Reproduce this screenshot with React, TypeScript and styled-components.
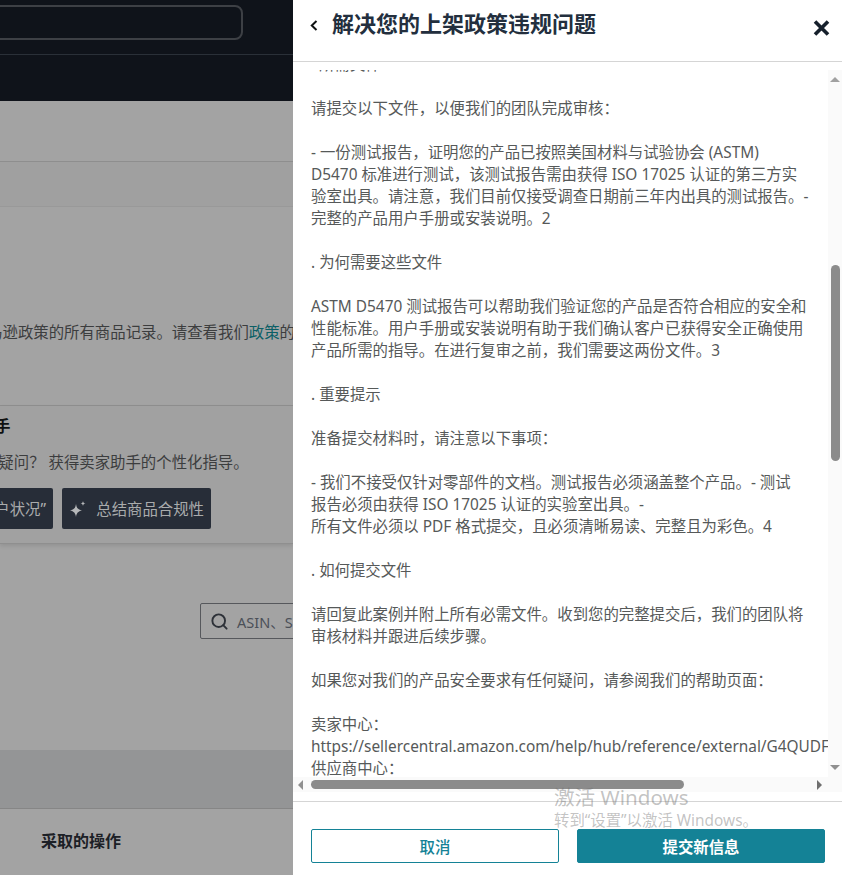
import React from 'react';
import styled, { createGlobalStyle } from 'styled-components';
import { Search } from 'lucide-react';

const GlobalStyle = createGlobalStyle`
  * {
    box-sizing: border-box;
  }
  html, body {
    margin: 0;
    padding: 0;
    background: #fff;
  }
  body {
    font-family: "Noto Sans", "Noto Sans CJK SC", sans-serif;
  }
`;

const Screen = styled.div`
  width: 842px;
  height: 875px;
  display: flex;
  position: relative;
  overflow: hidden;
`;

/* dimmed page behind the drawer */
const Backdrop = styled.div`
  width: 293px;
  flex: none;
  display: flex;
  flex-direction: column;
  overflow: hidden;
  background: #a3a3a3;
  font-size: 15.4px;
  color: #3c3d3e;
  white-space: nowrap;
`;

const TopNav = styled.div`
  height: 55px;
  padding-top: 5px;
  background: #0f131a;
  border-bottom: 1px solid #2a3038;
`;

const NavSearch = styled.div`
  width: 251px;
  height: 35px;
  margin-left: -8px;
  border: 2px solid #3d4045;
  border-radius: 8px;
`;

const SubNav = styled.div`
  height: 46px;
  background: #0f131a;
`;

const PageHead = styled.div`
  height: 61px;
  border-bottom: 1px solid #8e8e8e;
`;

const TabsRow = styled.div`
  height: 45px;
  background: #a0a0a0;
  border-bottom: 1px solid #999;
`;

const Intro = styled.div`
  height: 199px;
  padding-top: 115px;
  line-height: 22px;
  border-bottom: 1px solid #8f8f8f;
`;

const IntroText = styled.div`
  margin-left: -136px;
`;

const Link = styled.span`
  color: #0b5f66;
`;

const AssistCard = styled.div`
  height: 138px;
  padding-top: 10px;
  background: #a1a1a1;
  border-bottom: 1px solid #8f8f8f;
  box-shadow: 0 2px 4px rgba(0, 0, 0, 0.1);
`;

const AssistTitle = styled.div`
  margin-left: -82px;
  font-weight: 700;
  line-height: 22px;
  color: #0f1111;
`;

const AssistText = styled.div`
  margin: 14px 0 0 -94px;
  line-height: 22px;
`;

const AssistActions = styled.div`
  display: flex;
  gap: 9px;
  margin: 14px 0 0 -137px;
`;

const PromptButton = styled.div<{ $width: number }>`
  height: 41px;
  width: ${({ $width }) => $width}px;
  display: flex;
  align-items: center;
  justify-content: flex-end;
  gap: 9px;
  padding-right: 7px;
  background: #272d38;
  border-radius: 2px;
  color: #a9abac;
  flex: none;
`;

const TableTools = styled.div`
  height: 206px;
  padding: 59px 0 0 200px;
`;

const TableSearch = styled.div`
  width: 200px;
  height: 36px;
  display: flex;
  align-items: center;
  gap: 8px;
  padding-left: 9px;
  border: 1px solid #56585c;
  border-radius: 2px;
  font-size: 14.5px;
  color: #4b5058;

  svg {
    color: #2d3138;
    flex: none;
  }
`;

const TableBand = styled.div`
  height: 59px;
  background: #949596;
  border-bottom: 1px solid #868686;
`;

const TableHead = styled.div`
  flex: 1;
  display: flex;
  align-items: center;
  padding: 0 0 4px 41px;
  font-size: 16px;
  font-weight: 700;
  color: #1c2026;
`;

/* drawer */
const Drawer = styled.aside`
  flex: 1;
  min-width: 0;
  display: flex;
  flex-direction: column;
  background: #fff;
`;

const DrawerHeader = styled.header`
  height: 62px;
  flex: none;
  display: flex;
  align-items: flex-start;
  padding: 8px 12px 0 17px;
  border-bottom: 1px solid #d5d5d5;
  color: #232f3e;
`;

const BackIcon = styled.svg`
  margin-top: 12px;
  flex: none;
`;

const Title = styled.h1`
  flex: 1;
  margin: 0 0 0 14px;
  font-size: 22px;
  line-height: 30px;
  font-weight: 700;
`;

const CloseIcon = styled.svg`
  margin-top: 12px;
  flex: none;
`;

const ScrollArea = styled.div`
  flex: none;
  margin-top: 8px;
  height: 722px;
  display: flex;
  flex-direction: column;
`;

const ScrollRow = styled.div`
  height: 707px;
  display: flex;
`;

const Viewport = styled.div`
  flex: 1;
  min-width: 0;
  overflow: hidden;
  padding-left: 18px;
`;

const Body = styled.div`
  margin-top: -16px;
  font-size: 15.4px;
  line-height: 22px;
  color: #565959;
  white-space: nowrap;
`;

const Line = styled.div`
  height: 22px;
`;

const VTrack = styled.div`
  width: 14px;
  flex: none;
  display: flex;
  flex-direction: column;
  align-items: center;
  background: #fafafa;
`;

const VThumb = styled.div`
  width: 9px;
  height: 196px;
  margin-top: 183px;
  background: #8b8b8b;
  border-radius: 5px;
`;

const HTrack = styled.div`
  height: 15px;
  display: flex;
  align-items: center;
  background: #fafafa;
`;

const HThumb = styled.div`
  width: 373px;
  height: 9px;
  margin-left: 8px;
  background: #8b8b8b;
  border-radius: 5px;
`;

const ArrowUp = styled.div`
  margin-top: 7px;
  border-left: 5px solid transparent;
  border-right: 5px solid transparent;
  border-bottom: 5px solid #a0a0a0;
`;

const ArrowDown = styled.div`
  margin-top: auto;
  margin-bottom: 7px;
  border-left: 5px solid transparent;
  border-right: 5px solid transparent;
  border-top: 5px solid #8f8f8f;
`;

const ArrowLeft = styled.div`
  margin-left: 5px;
  border-top: 5px solid transparent;
  border-bottom: 5px solid transparent;
  border-right: 5px solid #8f8f8f;
`;

const ArrowRight = styled.div`
  margin-left: auto;
  margin-right: 20px;
  border-top: 5px solid transparent;
  border-bottom: 5px solid transparent;
  border-left: 5px solid #6f6f6f;
`;

const Footer = styled.footer`
  flex: none;
  margin-top: 9px;
  padding: 27px 17px 0 18px;
  display: flex;
  gap: 18px;
  border-top: 1px solid #d5d5d5;
`;

const Action = styled.button<{ $primary?: boolean }>`
  flex: 1;
  height: 34px;
  padding: 0;
  font-family: inherit;
  font-size: 15.4px;
  font-weight: ${({ $primary }) => ($primary ? 700 : 500)};
  color: ${({ $primary }) => ($primary ? '#fff' : '#148296')};
  background: ${({ $primary }) => ($primary ? '#148296' : '#fff')};
  border: 1px solid #148296;
  border-radius: 2px;
`;

const Watermark = styled.div`
  position: absolute;
  left: 554px;
  top: 784px;
  color: rgba(110, 110, 110, 0.42);
  pointer-events: none;
`;

const WatermarkTitle = styled.div`
  font-size: 20.6px;
  line-height: 26px;
`;

const WatermarkHint = styled.div`
  font-size: 15.4px;
  line-height: 20px;
  margin-top: 1px;
`;

const bodyLines = [
  '. 所需文件',
  '',
  '请提交以下文件，以便我们的团队完成审核：',
  '',
  '- 一份测试报告，证明您的产品已按照美国材料与试验协会 (ASTM)',
  'D5470 标准进行测试，该测试报告需由获得 ISO 17025 认证的第三方实',
  '验室出具。请注意，我们目前仅接受调查日期前三年内出具的测试报告。-',
  '完整的产品用户手册或安装说明。2',
  '',
  '. 为何需要这些文件',
  '',
  'ASTM D5470 测试报告可以帮助我们验证您的产品是否符合相应的安全和',
  '性能标准。用户手册或安装说明有助于我们确认客户已获得安全正确使用',
  '产品所需的指导。在进行复审之前，我们需要这两份文件。3',
  '',
  '. 重要提示',
  '',
  '准备提交材料时，请注意以下事项：',
  '',
  '- 我们不接受仅针对零部件的文档。测试报告必须涵盖整个产品。- 测试',
  '报告必须由获得 ISO 17025 认证的实验室出具。-',
  '所有文件必须以 PDF 格式提交，且必须清晰易读、完整且为彩色。4',
  '',
  '. 如何提交文件',
  '',
  '请回复此案例并附上所有必需文件。收到您的完整提交后，我们的团队将',
  '审核材料并跟进后续步骤。',
  '',
  '如果您对我们的产品安全要求有任何疑问，请参阅我们的帮助页面：',
  '',
  '卖家中心：',
  'https://sellercentral.amazon.com/help/hub/reference/external/G4QUDFLEVCJG7XVS',
  '供应商中心：',
];

const Sparkle = () => (
  <svg width="18" height="18" viewBox="0 0 18 18" fill="#b5b7b9">
    <path d="M7 4 C7.6 8 9 9.6 13 10.5 C9 11.4 7.6 13 7 17 C6.4 13 5 11.4 1 10.5 C5 9.6 6.4 8 7 4 Z" />
    <path d="M14 1 C14.2 2.6 14.8 3.2 16.5 3.5 C14.8 3.8 14.2 4.4 14 6 C13.8 4.4 13.2 3.8 11.5 3.5 C13.2 3.2 13.8 2.6 14 1 Z" />
  </svg>
);

const App = () => {
  return (
    <Screen>
      <GlobalStyle />
      <Backdrop>
        <TopNav>
          <NavSearch />
        </TopNav>
        <SubNav />
        <PageHead />
        <TabsRow />
        <Intro>
          <IntroText>
            此处列出了违反亚马逊政策的所有商品记录。请查看我们<Link>政策</Link>的详细信息
          </IntroText>
        </Intro>
        <AssistCard>
          <AssistTitle>询问卖家助手</AssistTitle>
          <AssistText>对您的账户有疑问？ 获得卖家助手的个性化指导。</AssistText>
          <AssistActions>
            <PromptButton $width={190}>“解释我的账户状况”</PromptButton>
            <PromptButton $width={149}>
              <Sparkle />
              总结商品合规性
            </PromptButton>
          </AssistActions>
        </AssistCard>
        <TableTools>
          <TableSearch>
            <Search size={19} strokeWidth={2.4} />
            ASIN、SKU
          </TableSearch>
        </TableTools>
        <TableBand />
        <TableHead>采取的操作</TableHead>
      </Backdrop>

      <Drawer>
        <DrawerHeader>
          <BackIcon width="8" height="11" viewBox="0 0 8 11">
            <path d="M6.5 1 L1.8 5.5 L6.5 10" fill="none" stroke="#0f1111" strokeWidth="2" />
          </BackIcon>
          <Title>解决您的上架政策违规问题</Title>
          <CloseIcon width="17" height="16" viewBox="0 0 17 16">
            <path d="M2 1.5 L15 14.5 M15 1.5 L2 14.5" fill="none" stroke="#16202c" strokeWidth="3.6" />
          </CloseIcon>
        </DrawerHeader>

        <ScrollArea>
          <ScrollRow>
            <Viewport>
              <Body>
                {bodyLines.map((text, index) => (
                  <Line key={index}>{text}</Line>
                ))}
              </Body>
            </Viewport>
            <VTrack>
              <ArrowUp />
              <VThumb />
              <ArrowDown />
            </VTrack>
          </ScrollRow>
          <HTrack>
            <ArrowLeft />
            <HThumb />
            <ArrowRight />
          </HTrack>
        </ScrollArea>

        <Footer>
          <Action>取消</Action>
          <Action $primary>提交新信息</Action>
        </Footer>
      </Drawer>

      <Watermark>
        <WatermarkTitle>激活 Windows</WatermarkTitle>
        <WatermarkHint>转到“设置”以激活 Windows。</WatermarkHint>
      </Watermark>
    </Screen>
  );
};

export default App;
